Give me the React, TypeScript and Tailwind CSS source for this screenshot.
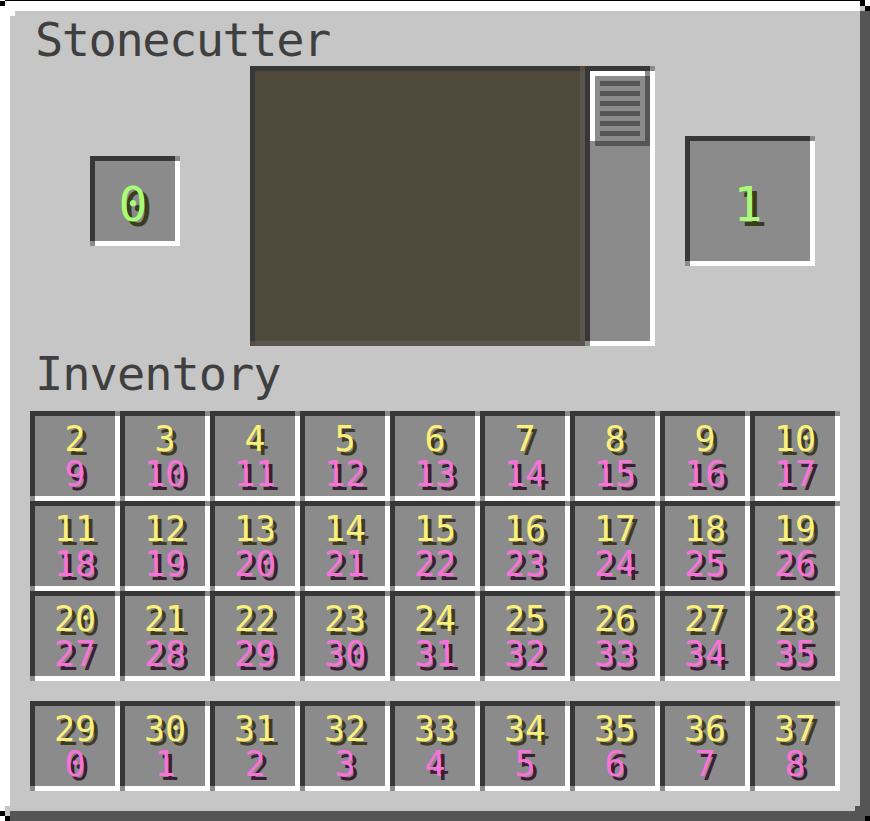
const mono = "font-['DejaVu_Sans_Mono',monospace]";

// 18x18 gui slot at 5x: dark top/left edge, white bottom/right edge, grey corners
const SLOT =
  "relative h-[90px] w-[90px] shrink-0 bg-[#8b8b8b] before:absolute before:left-0 before:top-0 before:h-[85px] before:w-[85px] before:border-l-[5px] before:border-t-[5px] before:border-[#373737] after:absolute after:bottom-0 after:right-0 after:h-[85px] after:w-[85px] after:border-b-[5px] after:border-r-[5px] after:border-white";

const BIG_SLOT =
  "relative h-[130px] w-[130px] shrink-0 bg-[#8b8b8b] before:absolute before:left-0 before:top-0 before:h-[125px] before:w-[125px] before:border-l-[5px] before:border-t-[5px] before:border-[#373737] after:absolute after:bottom-0 after:right-0 after:h-[125px] after:w-[125px] after:border-b-[5px] after:border-r-[5px] after:border-white";

const TRACK =
  "relative h-[280px] w-[70px] shrink-0 bg-[#8b8b8b] pl-[5px] pt-[5px] before:absolute before:left-0 before:top-0 before:h-[275px] before:w-[65px] before:border-l-[5px] before:border-t-[5px] before:border-[#373737] after:absolute after:bottom-0 after:right-0 after:h-[275px] after:w-[65px] after:border-b-[5px] after:border-r-[5px] after:border-white";

const THUMB =
  "relative z-10 flex h-[75px] w-[60px] flex-col gap-[5px] bg-[#8b8b8b] pl-[10px] pt-[10px] before:absolute before:left-0 before:top-0 before:h-[70px] before:w-[55px] before:border-l-[5px] before:border-t-[5px] before:border-white after:absolute after:bottom-0 after:right-0 after:h-[70px] after:w-[55px] after:border-b-[5px] after:border-r-[5px] after:border-[#555555]";

const RECIPES =
  "relative h-[280px] w-[335px] shrink-0 bg-[#5a4b37] p-[5px] before:absolute before:left-0 before:top-0 before:h-[275px] before:w-[330px] before:border-l-[5px] before:border-t-[5px] before:border-[#383838] after:absolute after:bottom-0 after:right-0 after:h-[275px] after:w-[330px] after:border-b-[5px] after:border-r-[5px] after:border-[#58564f]";

// slot label: first line is the slot id (yellow), second the index (pink)
function InvSlot({ top, bottom }: { top: number; bottom: number }) {
  return (
    <div className={`${SLOT} pt-[11px]`}>
      <p className="relative z-10 whitespace-pre-line text-center text-[35px] leading-[35px] text-[#f873d8] [text-shadow:4px_4px_0_#3e1c35] first-line:text-[#fbf17a] first-line:[text-shadow:4px_4px_0_#3e3b1e]">
        {`${top}\n${bottom}`}
      </p>
    </div>
  );
}

function Px({ className }: { className: string }) {
  return <div className={`absolute h-[5px] w-[5px] ${className}`} />;
}

export default function App() {
  const rows = [0, 1, 2];
  const cols = [0, 1, 2, 3, 4, 5, 6, 7, 8];

  return (
    <div className={`relative h-[821px] w-[870px] overflow-hidden bg-white ${mono}`}>
      <div className="ml-[5px] mr-[5px] h-px bg-black" />
      <div className="relative h-[820px] bg-[#c6c6c6] shadow-[inset_10px_10px_0_#ffffff,inset_-10px_-10px_0_#555555]">
        {/* stepped corners of the window frame */}
        <Px className="left-0 top-0 bg-black" />
        <Px className="left-[10px] top-[10px] bg-white" />
        <Px className="left-[860px] top-0 bg-black" />
        <Px className="left-[860px] top-[5px] bg-[#c6c6c6]" />
        <Px className="left-[865px] top-[5px] bg-black" />
        <Px className="left-0 top-[810px] bg-black" />
        <Px className="left-[5px] top-[805px] bg-[#c6c6c6]" />
        <Px className="left-[5px] top-[810px] bg-[#c6c6c6]" />
        <Px className="left-[5px] top-[815px] bg-black" />
        <Px className="left-[855px] top-[805px] bg-[#555555]" />
        <Px className="left-[865px] top-[815px] bg-black" />

        <div className="flex flex-col">
          <div className="pl-[35px] pt-[15px] text-[47px] leading-[47px] tracking-[-1.5px] text-[#3f3f3f]">
            Stonecutter
          </div>

          <div className="mt-[3px] flex items-start">
            <div className={`${SLOT} ml-[90px] mt-[90px] flex justify-center pr-[4px] pt-[24px]`}>
              <span className="relative z-10 text-[48px] leading-[48px] text-[#aafc77] [text-shadow:5px_5px_0_#3a3c1c]">
                0
              </span>
            </div>

            <div className={`${RECIPES} ml-[70px]`}>
              <div className="h-[270px] w-[325px] bg-[#4f4a3b]" />
            </div>

            <div className={TRACK}>
              <div className={THUMB}>
                {[0, 1, 2, 3, 4, 5].map((i) => (
                  <div key={i} className="relative z-10 h-[5px] w-[40px] bg-[#555555]" />
                ))}
              </div>
            </div>

            <div className={`${BIG_SLOT} ml-[30px] mt-[70px] flex justify-center pr-[4px] pt-[44px]`}>
              <span className="relative z-10 text-[48px] leading-[48px] text-[#aafc77] [text-shadow:5px_5px_0_#3a3c1c]">
                1
              </span>
            </div>
          </div>

          <div className="mt-[4px] pl-[35px] text-[47px] leading-[47px] tracking-[-1px] text-[#3f3f3f]">
            Inventory
          </div>

          <div className="ml-[30px] mt-[14px] grid w-[810px] grid-cols-9">
            {rows.map((r) =>
              cols.map((c) => <InvSlot key={`${r}-${c}`} top={2 + r * 9 + c} bottom={9 + r * 9 + c} />)
            )}
          </div>

          <div className="ml-[30px] mt-[20px] grid w-[810px] grid-cols-9">
            {cols.map((c) => (
              <InvSlot key={c} top={29 + c} bottom={c} />
            ))}
          </div>
        </div>
      </div>
    </div>
  );
}
